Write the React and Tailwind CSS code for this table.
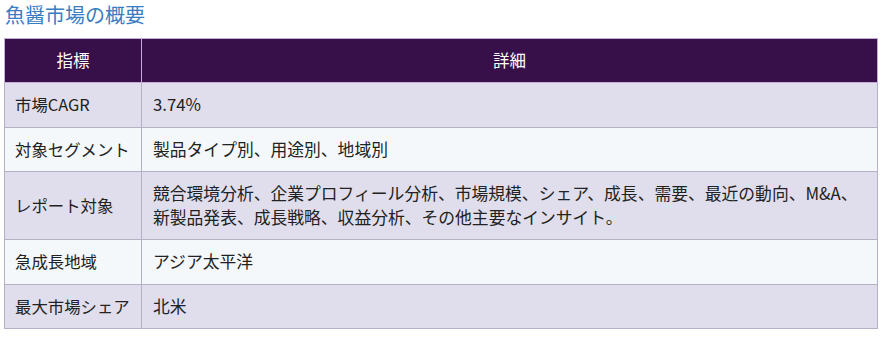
export default function App() {
  const rows = [
    ["市場CAGR", "3.74%"],
    ["対象セグメント", "製品タイプ別、用途別、地域別"],
    [
      "レポート対象",
      <>
        <span className="whitespace-nowrap">
          競合環境分析、企業プロフィール分析、市場規模、シェア、成長、需要、最近の動向、M&amp;A、
        </span>
        <br />
        新製品発表、成長戦略、収益分析、その他主要なインサイト。
      </>,
    ],
    ["急成長地域", "アジア太平洋"],
    ["最大市場シェア", "北米"],
  ];
  return (
    <div
      className="w-[886px] h-[337px] bg-white overflow-hidden"
      style={{ fontFamily: '"Noto Sans CJK JP", "Noto Sans", sans-serif' }}
    >
      <h2 className="pl-[5px] pt-[1px] h-[38px] text-[20px] leading-[28px] text-[#3a7cc2] font-normal">
        魚醤市場の概要
      </h2>
      <table className="ml-[4px] w-[874px] table-fixed border-collapse text-[#222]">
        <thead>
          <tr className="bg-[#37104a] text-white h-[44px] text-[16.5px]">
            <th className="w-[137px] border border-[#c6acd9] font-normal text-center">指標</th>
            <th className="border border-[#c6acd9] font-normal text-center">詳細</th>
          </tr>
        </thead>
        <tbody>
          {rows.map((r, i) => (
            <tr key={i} className={i % 2 === 0 ? "bg-[#e0deec]" : "bg-[#f4f8fb]"}>
              <td className="border border-[#b4b1c7] pl-[10px] pr-0 py-[10px] text-[16.4px] leading-[23.5px] align-middle whitespace-nowrap">
                {r[0]}
              </td>
              <td className="border border-[#b4b1c7] pl-[11px] pr-[6px] py-[10px] text-[16.8px] leading-[23.5px] align-middle">
                {r[1]}
              </td>
            </tr>
          ))}
        </tbody>
      </table>
    </div>
  );
}
